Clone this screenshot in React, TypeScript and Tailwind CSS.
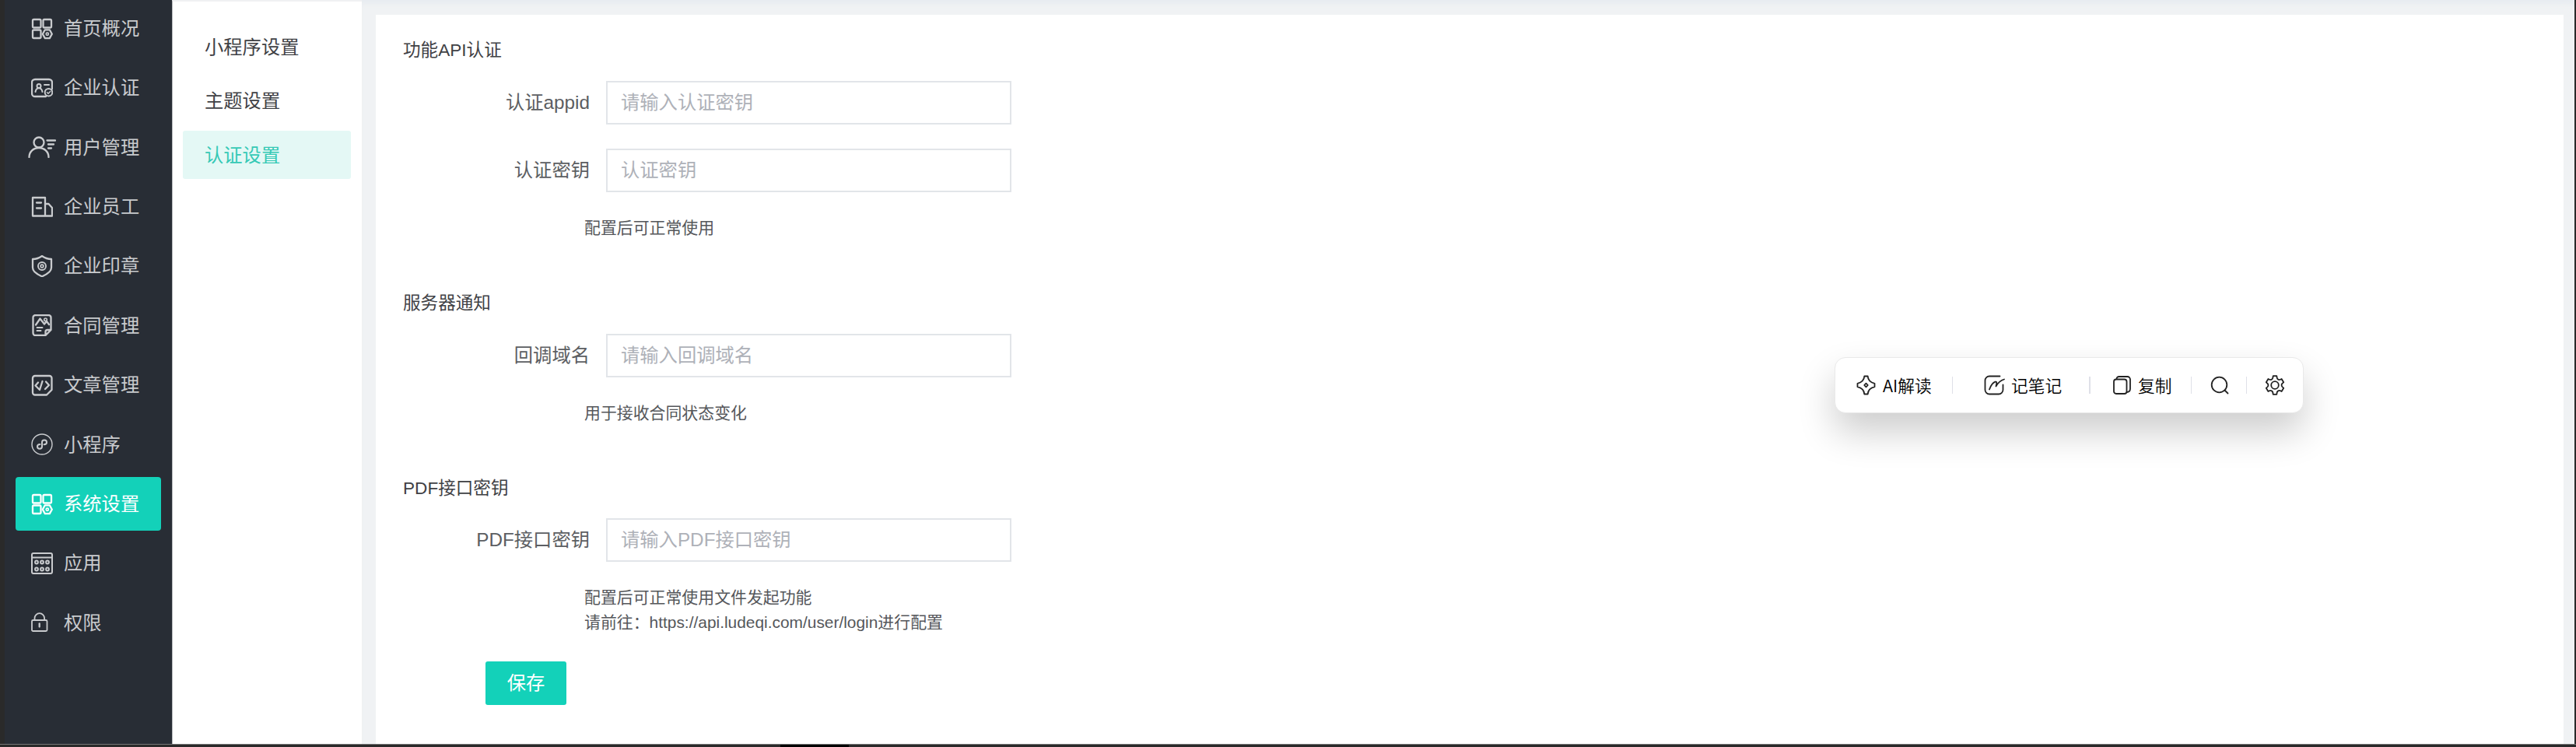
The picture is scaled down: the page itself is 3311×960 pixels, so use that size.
import type { ReactNode } from "react";

type NavItem = {
  label: string;
  icon: ReactNode;
  active?: boolean;
};

function Icon({ children, w = 28 }: { children: ReactNode; w?: number }) {
  return (
    <svg
      width={w}
      height="28"
      viewBox={`0 0 ${w} 28`}
      fill="none"
      stroke="currentColor"
      strokeWidth="2.3"
      strokeLinecap="round"
      strokeLinejoin="round"
      className="shrink-0"
    >
      {children}
    </svg>
  );
}

const gridIcon = (
  <Icon>
    <rect x="2" y="2" width="10.5" height="10.5" rx="1.5" />
    <rect x="15.5" y="2" width="10.5" height="10.5" rx="1.5" />
    <rect x="2" y="15.5" width="10.5" height="10.5" rx="1.5" />
    <path d="M17.8 15.3h6l3 5.4-3 5.4h-6l-3-5.4z" />
    <circle cx="20.8" cy="20.7" r="1.6" strokeWidth="1.7" />
  </Icon>
);

const navItems: NavItem[] = [
  { label: "首页概况", icon: gridIcon },
  {
    label: "企业认证",
    icon: (
      <Icon>
        <path d="M27 15V7a4 4 0 0 0-4-4H5a4 4 0 0 0-4 4v14a4 4 0 0 0 4 4h14" />
        <circle cx="10" cy="11.5" r="2.5" strokeWidth="2" />
        <path d="M5.5 19c.5-3 2-4.8 4.5-4.8s4 1.8 4.5 4.8" strokeWidth="2" />
        <path d="M17 10h6" strokeWidth="2" />
        <circle cx="22.5" cy="19.7" r="4.8" strokeWidth="2" />
        <path d="m20.5 19.7 1.5 1.5 2.7-2.7" strokeWidth="1.5" />
      </Icon>
    ),
  },
  {
    label: "用户管理",
    icon: (
      <Icon w={36}>
        <circle cx="14" cy="8" r="6.5" />
        <path d="M1.5 27c0-7 5.5-12 12.5-12s12.5 5 12.5 12M24.5 5.5H35M26 10.5h7M26 15.5h4" />
      </Icon>
    ),
  },
  {
    label: "企业员工",
    icon: (
      <Icon>
        <path d="M2 2h16v23.5H2zM18 10h4.5l4.5 5v10.5h-9M7 8.5h6M7 15.5h6" />
      </Icon>
    ),
  },
  {
    label: "企业印章",
    icon: (
      <Icon>
        <path d="M14 1c3.5 2.5 7.5 4 12 4v11c0 5-5.5 8.5-12 11.3C7.5 24.500 2 21 2 16V5c4.500 0 8.500-1.500 12-4z" />
        <circle cx="14" cy="14" r="5" strokeWidth="1.9" />
        <circle cx="14" cy="14" r="1.8" strokeWidth="1.7" />
      </Icon>
    ),
  },
  {
    label: "合同管理",
    icon: (
      <Icon>
        <path d="M18.5 27h-13a3 3 0 0 1-3-3V4a3 3 0 0 1 3-3h17a3 3 0 0 1 3 3v16l-7 7v-4.500a2.500 2.500 0 0 1 2.500-2.500h4.500" />
        <path d="m6 13.500 5.500-8 5.500 7 3-3.500 3 4" />
        <circle cx="18.5" cy="6.8" r="1.8" strokeWidth="1.6" />
        <path d="M7.500 17h7M7.500 21h5" strokeWidth="1.9" />
      </Icon>
    ),
  },
  {
    label: "文章管理",
    icon: (
      <Icon>
        <path d="M20 26.500H5a3 3 0 0 1-3-3V5a3 3 0 0 1 3-3h18.500a3 3 0 0 1 3 3v15z" />
        <path d="m9 10.500-3.500 4 5.500 5.500 3.500-11M19 9.500l4 4.500-5 5" />
      </Icon>
    ),
  },
  {
    label: "小程序",
    icon: (
      <Icon>
        <circle cx="14" cy="14" r="13" strokeWidth="1.4" />
        <path
          d="M11.5 14c-2.300 0-3.500 1.200-3.500 2.800 0 1.700 1.300 2.900 3 2.900s3-1.200 3-2.900v-5.400c0-1.700 1.300-2.900 3-2.900s3 1.200 3 2.900c0 1.600-1.200 2.800-3.500 2.800"
          strokeWidth="2"
        />
      </Icon>
    ),
  },
  { label: "系统设置", icon: gridIcon, active: true },
  {
    label: "应用",
    icon: (
      <Icon>
        <rect x="1" y="1" width="26" height="26" rx="2" strokeWidth="2" />
        <path d="M1 6.500h26" strokeWidth="2" />
        <g strokeWidth="2">
          <circle cx="7" cy="12.5" r="1.9" />
          <circle cx="14" cy="12.5" r="1.9" />
          <circle cx="21" cy="12.5" r="1.9" />
          <circle cx="7" cy="21.5" r="1.9" />
          <circle cx="14" cy="21.5" r="1.9" />
          <circle cx="21" cy="21.5" r="1.9" />
        </g>
      </Icon>
    ),
  },
  {
    label: "权限",
    icon: (
      <Icon>
        <rect x="1" y="11" width="19.5" height="14" rx="1.5" strokeWidth="1.8" />
        <path d="M4.500 11V8.500a6.300 6.300 0 0 1 12.600 0V11" strokeWidth="1.8" />
        <path d="M10.700 15.500v4" />
      </Icon>
    ),
  },
];

const subItems = [
  { label: "小程序设置" },
  { label: "主题设置" },
  { label: "认证设置", active: true },
];

function Field({ label, placeholder }: { label: string; placeholder: string }) {
  return (
    <div className="flex h-[56px] items-center">
      <label className="w-[239px] text-right text-[24.3px] text-[#5c5e62]">{label}</label>
      <input
        className="ml-[21px] h-[56px] w-[521px] border-2 border-[#e2e5e9] bg-white px-[17px] text-[24.3px] outline-none placeholder:text-[#aeb1b8]"
        placeholder={placeholder}
      />
    </div>
  );
}

function Title({ children }: { children: ReactNode }) {
  return (
    <h2 className="-ml-px h-[32px] text-[22.6px] leading-[34px] text-[#3f4145]">{children}</h2>
  );
}

function Hint({ children }: { children: ReactNode }) {
  return (
    <div className="ml-[232px] text-[20.9px] leading-[32px] whitespace-nowrap text-[#55575b]">
      {children}
    </div>
  );
}

function Divider({ className }: { className: string }) {
  return <i className={`h-[22px] shrink-0 bg-[#dfe0e8] ${className}`} />;
}

function Toolbar() {
  return (
    <div className="absolute top-[459px] left-[2358px] flex h-[72px] w-[603px] items-center rounded-[14px] border border-[#e9e9e9] bg-white pl-[27px] font-['Noto_Sans_CJK_SC',sans-serif] text-[21.7px] font-[350] text-black shadow-[0_24px_48px_rgba(0,0,0,0.2)]">
      <svg width="25" height="26" viewBox="0 0 25 26" fill="none" stroke="#222" strokeWidth="1.8" strokeLinejoin="round">
        <path d="M10.300 1.500h4.400c.3 5 2.800 7.800 8.800 9.300v4.400c-6 1.500-8.500 4.300-8.800 9.300h-4.400c-.3-5-2.800-7.800-8.800-9.300v-4.400c6-1.500 8.500-4.300 8.800-9.300z" />
        <path d="m12.500 10.600 2.300 2.400-2.300 2.400-2.300-2.400z" />
      </svg>
      <span className="ml-[9px] w-[66px] whitespace-nowrap">AI解读</span>
      <Divider className="ml-[23px] w-px" />
      <svg width="27" height="26" viewBox="0 0 27 26" className="ml-[40px]" fill="none" stroke="#222" strokeWidth="1.8" strokeLinecap="round" strokeLinejoin="round">
        <path d="M20.500 1.500H7a5.500 5.500 0 0 0-5.500 5.500v12A5.500 5.500 0 0 0 7 24.500h12a5.500 5.500 0 0 0 5.500-5.500v-6.500" />
        <path d="M7 18.500c1.500-4 4-8.500 7.500-9.800 2.500-.8 2 2 1 5.800 2-3.500 5-7.500 10.500-9" />
      </svg>
      <span className="ml-[8px] w-[65px] whitespace-nowrap">记笔记</span>
      <Divider className="ml-[35px] w-[2px]" />
      <svg width="23" height="26" viewBox="0 0 23 26" className="ml-[29px]" fill="none" stroke="#222" strokeWidth="1.8">
        <rect x="1" y="5.5" width="16.5" height="18.5" rx="3" />
        <path d="M4.500 5.500c0-2.500 1-3.500 3.500-3.500h10.500a3.500 3.500 0 0 1 3.500 3.500v12c0 2.500-1.500 4.500-4.500 4.500" />
      </svg>
      <span className="ml-[9px] w-[44px] whitespace-nowrap">复制</span>
      <Divider className="ml-[24px] w-px" />
      <svg width="24" height="26" viewBox="0 0 24 26" className="ml-[24px]" fill="none" stroke="#222" strokeWidth="1.8" strokeLinecap="round">
        <circle cx="11.5" cy="12.5" r="9.8" />
        <path d="m18.500 19.500 4 4" />
      </svg>
      <Divider className="ml-[22px] w-px" />
      <svg width="26" height="26" viewBox="0 0 26 26" className="ml-[23px]" fill="none" stroke="#222" strokeWidth="1.8" strokeLinejoin="round">
        <path d="M10.700 1.200h4.600q.2 3.900 2.200 4.600 1.300.7 4.100-.8l2.600 4.200q-2.800 2-2.700 3.800 0 1.800 2.700 3.800l-2.600 4.200q-2.800-1.500-4.100-.8-2 .7-2.200 4.600h-4.600q-.2-3.900-2.200-4.600-1.300-.7-4.100.8l-2.600-4.200q2.800-2 2.700-3.800 0-1.800-2.700-3.800l2.600-4.200q2.800 1.500 4.100.8 2-.7 2.200-4.600z" />
        <circle cx="13" cy="13" r="4.8" />
      </svg>
    </div>
  );
}

export default function App() {
  return (
    <div className="relative flex h-[960px] w-[3311px] flex-col overflow-hidden bg-[#2a2a2a] font-['Liberation_Sans','Noto_Sans_CJK_SC',sans-serif]">
      <div className="flex h-[956px] pr-[2px] pl-[6px]">
        <aside className="w-[215px] shrink-0 bg-[#282d35] px-[14px]">
          <nav className="flex flex-col gap-[7.4px] pt-[2px]">
            {navItems.map((item) => (
              <div
                key={item.label}
                className={`flex h-[69px] shrink-0 items-center rounded-[4px] pl-[20px] ${
                  item.active ? "bg-[#13d1b9] text-white" : "text-[#c9cbce]"
                }`}
              >
                <div
                  className={`flex w-[42px] shrink-0 ${
                    item.label === "用户管理" ? "mr-[4px] -ml-[4px]" : ""
                  }`}
                >
                  {item.icon}
                </div>
                <span className="pt-px text-[24.3px] whitespace-nowrap">{item.label}</span>
              </div>
            ))}
          </nav>
        </aside>

        <section className="w-[244px] shrink-0 border-t-2 border-l border-t-[#f0f1f3] border-l-[#b8babd] bg-white pr-[14px] pl-[13px]">
          <div className="mt-[27px] flex flex-col gap-[7.5px]">
            {subItems.map((item) => (
              <div
                key={item.label}
                className={`flex h-[62px] items-center rounded-[3px] pt-[2px] pl-[28px] text-[24.3px] ${
                  item.active ? "bg-[#e4f8f5] text-[#35c9b5]" : "text-[#3f4145]"
                }`}
              >
                {item.label}
              </div>
            ))}
          </div>
        </section>

        <main className="flex-1 bg-[#f0f2f4] pt-[19px] pr-[14px] pl-[18px] shadow-[inset_0_8px_6px_-3px_#e8ecf0]">
          <div className="h-full bg-white pt-[29px] pl-[36px]">
            <Title>功能API认证</Title>
            <div className="mt-[24px] flex flex-col gap-[31px]">
              <Field label="认证appid" placeholder="请输入认证密钥" />
              <Field label="认证密钥" placeholder="认证密钥" />
            </div>
            <div className="mt-[30px]">
              <Hint>配置后可正常使用</Hint>
            </div>

            <div className="mt-[64px]">
              <Title>服务器通知</Title>
              <div className="mt-[24px]">
                <Field label="回调域名" placeholder="请输入回调域名" />
              </div>
              <div className="mt-[30px]">
                <Hint>用于接收合同状态变化</Hint>
              </div>
            </div>

            <div className="mt-[64px]">
              <Title>PDF接口密钥</Title>
              <div className="mt-[23px]">
                <Field label="PDF接口密钥" placeholder="请输入PDF接口密钥" />
              </div>
              <div className="mt-[30px]">
                <Hint>
                  <p>配置后可正常使用文件发起功能</p>
                  <p>请前往：https://api.ludeqi.com/user/login进行配置</p>
                </Hint>
              </div>
            </div>

            <button className="mt-[34px] ml-[105px] h-[56px] w-[104px] rounded-[3px] bg-[#13d1b9] text-[24.3px] text-white">
              保存
            </button>
          </div>
        </main>
      </div>
      <div className="h-[4px] border-t border-[#777] bg-[#2a2a2a]">
        <div className="ml-[1003px] h-full w-[88px] bg-black" />
      </div>
      <Toolbar />
    </div>
  );
}
